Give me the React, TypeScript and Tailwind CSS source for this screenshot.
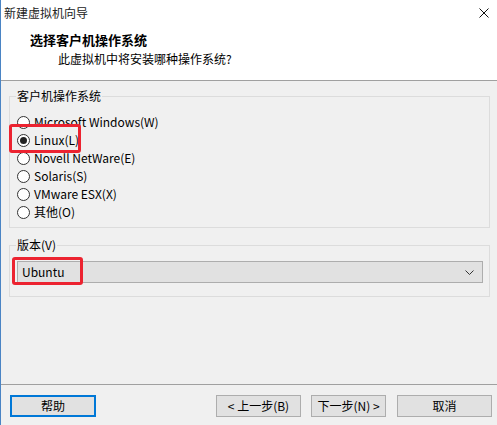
import React from "react";

const font = { fontFamily: '"Noto Sans CJK SC", "Noto Sans", sans-serif' };

function Radio({ label, checked }: { label: string; checked?: boolean }) {
  return (
    <div className="flex items-center h-[18px]">
      <span className="w-[13px] h-[13px] rounded-full border border-[#333333] bg-white flex items-center justify-center shrink-0">
        {checked && <span className="w-[7px] h-[7px] rounded-full bg-[#222222]" />}
      </span>
      <span className="ml-[4px] text-[12px] leading-[16px] text-black">{label}</span>
    </div>
  );
}

function Btn({ children, w, primary }: { children: React.ReactNode; w: string; primary?: boolean }) {
  return (
    <div
      className={`${w} h-[22px] flex items-center justify-center bg-[#e1e1e1] text-[12px] leading-[16px] text-black ${
        primary ? "border-2 border-[#0078d7]" : "border border-[#adadad]"
      }`}
    >
      {children}
    </div>
  );
}

export default function App() {
  return (
    <div className="relative w-[497px] h-[425px] overflow-hidden bg-[#f0f0f0] border-l border-[#4a84c4] flex flex-col" style={font}>
      {/* title bar */}
      <div className="h-[25px] bg-white flex items-center justify-between pl-[3px] pr-[8px]">
        <span className="text-[12px] leading-[16px] text-[#222]">新建虚拟机向导</span>
        <svg width="10" height="10" viewBox="0 0 10 10">
          <path d="M0.5 0.5 L9.5 9.5 M9.5 0.5 L0.5 9.5" stroke="#111" strokeWidth="1" />
        </svg>
      </div>
      {/* header */}
      <div className="h-[56px] bg-white border-b border-[#a0a0a0] flex flex-col pt-[6px]">
        <div className="pl-[29px] text-[13px] leading-[17px] font-bold text-black">选择客户机操作系统</div>
        <div className="pl-[57px] mt-[3px] text-[12px] leading-[16px] text-black">此虚拟机中将安装哪种操作系统?</div>
      </div>
      {/* body */}
      <div className="h-[304px] border-b border-[#a0a0a0] flex flex-col pl-[8px]">
        <fieldset className="mt-[7px] w-[481px] border border-[#dcdcdc] pl-[7px] pt-[9px] pb-[6px]">
          <legend className="ml-[-1px] px-[1px] text-[12px] leading-[16px] text-black">客户机操作系统</legend>
          <Radio label="Microsoft Windows(W)" />
          <Radio label="Linux(L)" checked />
          <Radio label="Novell NetWare(E)" />
          <Radio label="Solaris(S)" />
          <Radio label="VMware ESX(X)" />
          <Radio label="其他(O)" />
        </fieldset>
        <fieldset className="mt-[9px] w-[481px] border border-[#dcdcdc] pl-[7px] pt-[8px] pb-[13px]">
          <legend className="ml-[-1px] px-[1px] text-[12px] leading-[16px] text-black">版本(V)</legend>
          <div className="w-[466px] h-[22px] bg-[#e1e1e1] border border-[#adadad] flex items-center justify-between pl-[4px] pr-[8px]">
            <span className="text-[12px] leading-[16px] text-black">Ubuntu</span>
            <svg width="9" height="5" viewBox="0 0 9 5">
              <path d="M0.5 0.5 L4.5 4.5 L8.5 0.5" fill="none" stroke="#333" strokeWidth="1" />
            </svg>
          </div>
        </fieldset>
      </div>
      {/* footer */}
      <div className="flex items-start pt-[10px] pl-[9px] pr-[5px]">
        <Btn w="w-[86px]" primary>帮助</Btn>
        <div className="flex-1" />
        <Btn w="w-[85px]">&lt; 上一步(B)</Btn>
        <div className="w-[10px]" />
        <Btn w="w-[75px]">下一步(N) &gt;</Btn>
        <div className="w-[11px]" />
        <Btn w="w-[95px]">取消</Btn>
      </div>

      {/* red annotation boxes */}
      <div className="absolute left-[8px] top-[124px] w-[72px] h-[29px] border-[3px] border-[#ec2330] rounded-[3px]" />
      <div className="absolute left-[11px] top-[257px] w-[71px] h-[28px] border-[3px] border-[#ec2330] rounded-[3px]" />
    </div>
  );
}
